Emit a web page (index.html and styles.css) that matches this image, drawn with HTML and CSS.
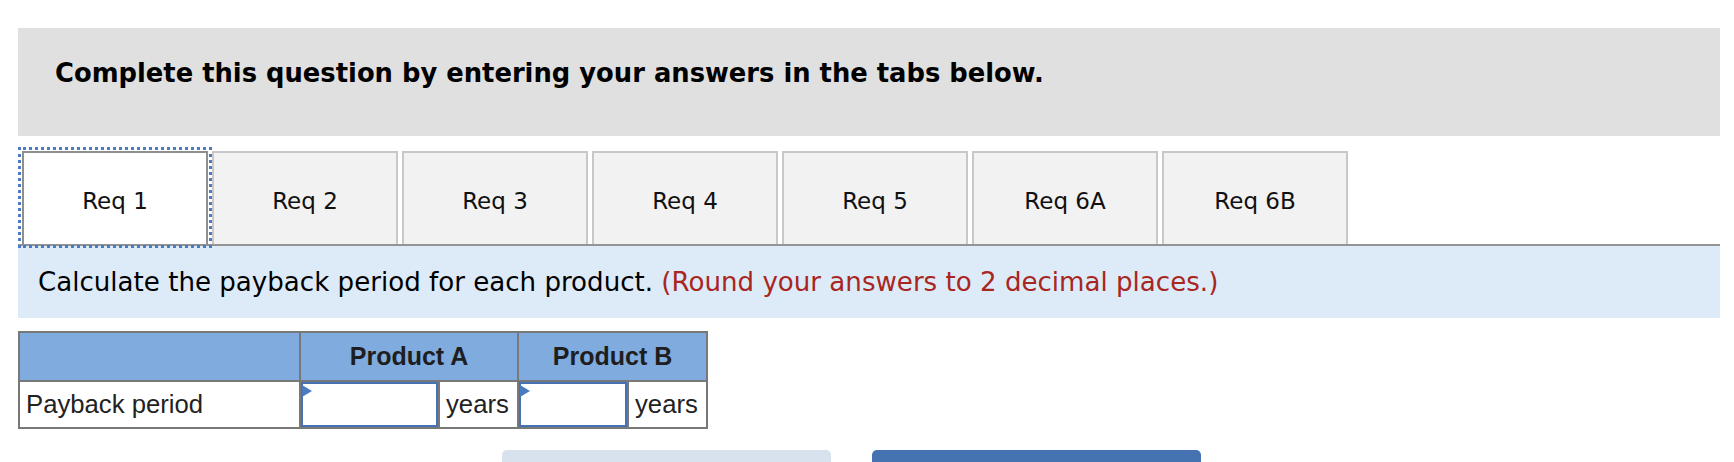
FILE: index.html
```html
<!DOCTYPE html>
<html lang="en">
<head>
<meta charset="utf-8">
<title>Payback period</title>
<link rel="stylesheet" href="styles.css">
</head>
<body>
<div class="page">
  <div class="prompt">
    <h2>Complete this question by entering your answers in the tabs below.</h2>
  </div>
  <div class="tabs">
    <button class="tab active">Req 1</button>
    <button class="tab">Req 2</button>
    <button class="tab">Req 3</button>
    <button class="tab">Req 4</button>
    <button class="tab">Req 5</button>
    <button class="tab">Req 6A</button>
    <button class="tab">Req 6B</button>
  </div>
  <div class="instr">Calculate the payback period for each product.&nbsp;<span class="note">(Round your answers to 2 decimal places.)</span></div>
  <div class="grid">
    <div class="hcell"></div>
    <div class="hcell span2">Product A</div>
    <div class="hcell span2">Product B</div>
    <div class="cell label">Payback period</div>
    <div class="cell inp"><input type="text" aria-label="Product A payback period"></div>
    <div class="cell unit">years</div>
    <div class="cell inp"><input type="text" aria-label="Product B payback period"></div>
    <div class="cell unit">years</div>
  </div>
  <div class="nav">
    <button class="btn prev" aria-label="Previous: Req 1"></button>
    <button class="btn next" aria-label="Next: Req 2"></button>
  </div>
</div>
</body>
</html>
```

FILE: styles.css
```css
html, body {
  margin: 0;
  padding: 0;
  background: #fff;
}

.page {
  padding: 28px 14px 0 18px;
}

.prompt {
  box-sizing: border-box;
  height: 108px;
  background: #e0e0e0;
  padding: 30px 0 0 37px;
}

.prompt h2 {
  margin: 0;
  font-family: "DejaVu Sans", Verdana, sans-serif;
  font-weight: bold;
  font-size: 25.8px;
  line-height: 30px;
  color: #000;
  white-space: nowrap;
}

.tabs {
  margin-top: 15px;
  display: flex;
  gap: 4px;
  padding-left: 4px;
  border-bottom: 2px solid #949494;
}

.tab {
  box-sizing: border-box;
  width: 186px;
  height: 93px;
  margin: 0;
  padding: 5px 0 0 0;
  border: 2px solid #c8c8c8;
  border-bottom: none;
  background: #f2f2f2;
  font-family: "DejaVu Sans", Verdana, sans-serif;
  font-size: 23px;
  color: #111;
  cursor: pointer;
}

.tab.active {
  background: #fff;
  border-color: #8f8f8f;
  outline: 3px dotted #4a7bc4;
  outline-offset: 1px;
}

.instr {
  box-sizing: border-box;
  height: 72px;
  background: #ddebf8;
  display: flex;
  align-items: center;
  padding-left: 20px;
  font-family: "DejaVu Sans", Verdana, sans-serif;
  font-size: 26.1px;
  color: #000;
  white-space: nowrap;
}

.note {
  color: #a8261f;
}

.grid {
  margin-top: 13px;
  display: grid;
  grid-template-columns: 279px 137px 77px 108px 77px;
  grid-template-rows: 47px 45px;
  gap: 2px;
  padding: 2px;
  background: #787878;
  width: max-content;
}

.hcell {
  background: #7fabde;
  font-family: "Liberation Sans", Arial, sans-serif;
  font-weight: bold;
  font-size: 25px;
  color: #1e1e1e;
  display: flex;
  align-items: center;
  justify-content: center;
}

.span2 {
  grid-column: span 2;
}

.cell {
  background: #fff;
  font-family: "Liberation Sans", Arial, sans-serif;
  font-size: 25.7px;
  color: #222;
  display: flex;
  align-items: center;
}

.label {
  padding-left: 6px;
}

.unit {
  padding-left: 6px;
}

.inp {
  position: relative;
  align-items: stretch;
}

.inp input {
  box-sizing: border-box;
  width: 100%;
  height: 100%;
  margin: 0;
  padding: 0 6px;
  border: 2px solid #4472b4;
  background: #fff;
  outline: none;
  font-family: "Liberation Sans", Arial, sans-serif;
  font-size: 22px;
}

.inp::before {
  content: "";
  position: absolute;
  left: 1px;
  top: 3px;
  border-left: 10px solid #4a7bc0;
  border-top: 6px solid transparent;
  border-bottom: 6px solid transparent;
}

.nav {
  margin-top: 21px;
  display: flex;
  gap: 41px;
  padding-left: 484px;
}

.btn {
  width: 329px;
  height: 56px;
  margin: 0;
  padding: 0;
  border: none;
  border-radius: 5px;
  cursor: pointer;
}

.prev {
  background: #d8e2ee;
}

.next {
  background: #4573b2;
}
```
